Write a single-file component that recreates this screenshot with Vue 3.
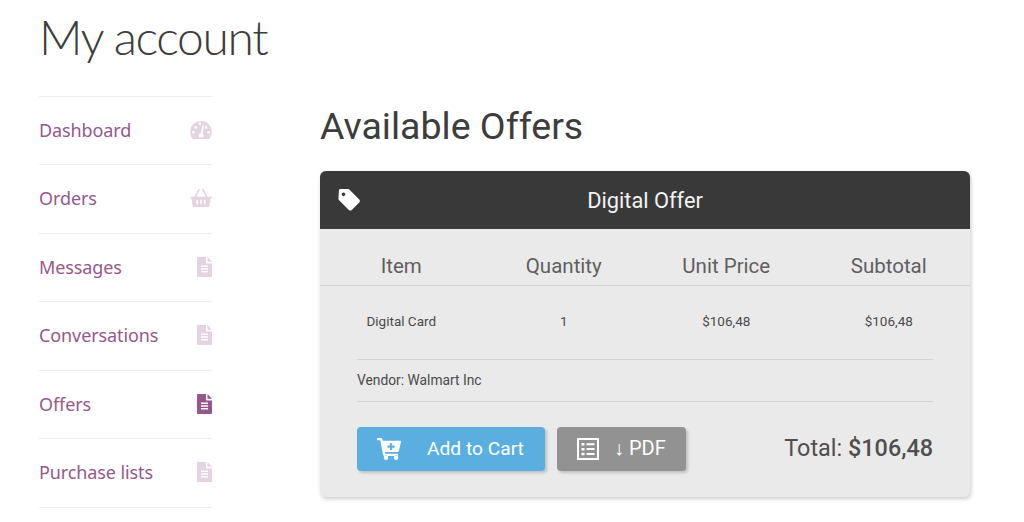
<template>
  <div class="page">
    <h1 class="title">My account</h1>
    <div class="columns">
      <nav class="side-nav">
        <a v-for="link in links" :key="link.label" class="nav-link" :class="{ active: link.active }">
          <span>{{ link.label }}</span>
          <svg v-if="link.icon === 'gauge'" class="nav-icon gauge" viewBox="0 0 24 20">
            <path fill-rule="evenodd" d="M12 0C5.400 0 0 5.400 0 12c0 2.700.8 5.200 2.200 7.200.3.500.8.800 1.400.800h16.800c.6 0 1.100-.3 1.400-.8C23.200 17.200 24 14.700 24 12 24 5.400 18.600 0 12 0zM3.600 14.200a1.600 1.600 0 1 1 0-3.200 1.600 1.600 0 0 1 0 3.200zm2.600-5.500a1.600 1.600 0 1 1 0-3.200 1.600 1.600 0 0 1 0 3.200zM10.800 4.500a1.500 1.500 0 1 1 0-3 1.500 1.500 0 0 1 0 3zm4.400.9-1.200 9a2.500 2.500 0 0 1 .6 3.600H9.800a2.500 2.500 0 0 1 1.800-4l2-8.800a.8.800 0 0 1 1.600.2zM20.400 14.200a1.600 1.600 0 1 1 0-3.200 1.600 1.600 0 0 1 0 3.200zm-2.600-5.500a1.600 1.600 0 1 1 0-3.200 1.600 1.600 0 0 1 0 3.200z" />
          </svg>
          <svg v-else-if="link.icon === 'basket'" class="nav-icon basket" viewBox="0 0 24 20">
            <path fill-rule="evenodd" d="M0 8.500h4.600L9 .5c.3-.5.900-.6 1.300-.3.400.2.500.7.300 1.100L6.800 8.500h10.400L13.400 1.300c-.2-.4-.1-.9.300-1.100.4-.3 1-.2 1.300.3l4.400 8H24v1.800h-1.300L21.300 19c-.1.600-.6 1-1.200 1H3.900c-.6 0-1.100-.4-1.200-1L1.300 10.300H0zM7 12v5h1.800v-5zm4.100 0v5h1.800v-5zm4.100 0v5H17v-5z" />
          </svg>
          <svg v-else class="nav-icon doc" viewBox="0 0 15 20">
            <path fill-rule="evenodd" d="M1 0h8v5.500c0 .6.400 1 1 1h5V19c0 .6-.4 1-1 1H1c-.6 0-1-.4-1-1V1c0-.6.400-1 1-1zM4 8.500V10h7V8.500zm0 2.800v1.500h7v-1.500zm0 2.800v1.500h7v-1.500zM10.500 0 15 4.800h-4.500z" />
          </svg>
        </a>
      </nav>
      <main class="content">
        <h2 class="heading">Available Offers</h2>
        <section class="card">
          <header class="card-head">
            <svg class="tag" viewBox="0 0 24 24">
              <path fill-rule="evenodd" d="M1 1.500C1 .7 1.700 0 2.500 0h8.300c.7 0 1.300.3 1.800.8l10.600 10.600c.9.900.9 2.300 0 3.200l-8.200 8.200c-.9.900-2.300.9-3.200 0L1.200 12.200c-.5-.5-.7-1.100-.7-1.800zM6 7.800a2 2 0 1 0 0-4 2 2 0 0 0 0 4z" />
            </svg>
            <span>Digital Offer</span>
          </header>
          <div class="grid-row grid-head">
            <div v-for="col in columns" :key="col">{{ col }}</div>
          </div>
          <div class="grid-row grid-body">
            <div>Digital Card</div>
            <div>1</div>
            <div>$106,48</div>
            <div>$106,48</div>
          </div>
          <div class="card-inner">
            <div class="vendor">Vendor: Walmart Inc</div>
            <div class="actions">
              <button class="btn btn-cart">
                <svg class="cart" viewBox="0 0 26 24">
                  <path fill-rule="evenodd" d="M0 0h4.600c.6 0 1 .3 1.100.9L6.100 3H25c.7 0 1.100.6 1 1.300l-2.200 10c-.1.500-.6.900-1.100.9H8.700l.4 1.900h13.600v2.400H7.600c-.5 0-1-.4-1.100-.9L3.500 2.400H0zM14 5.800v2.500h-2.600v2.400H14v2.500h2.400v-2.500H19V8.300h-2.600V5.800zM9.700 19a2.500 2.500 0 1 1 0 5 2.500 2.500 0 0 1 0-5zm11 0a2.500 2.500 0 1 1 0 5 2.500 2.500 0 0 1 0-5z" />
                </svg>
                <span>Add to Cart</span>
              </button>
              <button class="btn btn-pdf">
                <svg class="list" viewBox="0 0 22 22">
                  <path fill-rule="evenodd" d="M0 0h22v22H0zM2 2v18h18V2zM4.500 5h3v2.500h-3zm5 .2h8v2h-8zm-5 4.700h3v2.500h-3zm5 .2h8v2h-8zm-5 4.700h3v2.500h-3zm5 .2h8v2h-8z" />
                </svg>
                <span>↓ PDF</span>
              </button>
              <div class="total">Total: <b>$106,48</b></div>
            </div>
          </div>
        </section>
      </main>
    </div>
  </div>
</template>

<script setup>
const links = [
  { label: 'Dashboard', icon: 'gauge' },
  { label: 'Orders', icon: 'basket' },
  { label: 'Messages', icon: 'doc' },
  { label: 'Conversations', icon: 'doc' },
  { label: 'Offers', icon: 'doc', active: true },
  { label: 'Purchase lists', icon: 'doc' }
]
const columns = ['Item', 'Quantity', 'Unit Price', 'Subtotal']
</script>

<style>
html, body { background: #fff; overflow: hidden; }
</style>

<style scoped>
.page { width: 1024px; height: 522px; overflow: hidden; padding-left: 39px; box-sizing: border-box; font-family: Roboto, sans-serif; }
.title { margin: 0; height: 96px; padding-top: 8px; box-sizing: border-box; font: 300 48px/58px Lato, sans-serif; letter-spacing: -1.4px; color: #3d3d3d; }
.columns { display: flex; }
.side-nav { width: 173px; border-top: 1px solid #eee; flex-shrink: 0; }
.nav-link { height: 68.5px; padding-bottom: 1px; box-sizing: border-box; border-bottom: 1px solid #eee; display: flex; align-items: center; justify-content: space-between; font: 400 18px "Noto Sans", sans-serif; letter-spacing: -0.1px; color: #96588a; }
.nav-link:first-child { height: 68px; }
.nav-icon { fill: #96588a; opacity: 0.25; display: block; }
.nav-link.active .nav-icon { opacity: 1; }
.gauge, .basket { width: 22px; height: 18px; }
.doc { width: 15px; height: 20px; }
.content { margin-left: 108px; width: 650px; }
.heading { margin: 0; height: 75px; padding-top: 5px; box-sizing: border-box; font: 400 37.500px/50px Roboto, sans-serif; color: #3d3d3d; }
.card { height: 326px; background: #eaeaea; border-radius: 6px; box-shadow: 1px 2px 4px rgba(0, 0, 0, 0.2); }
.card-head { position: relative; height: 58px; background: #393939; border-radius: 6px 6px 0 0; display: flex; align-items: center; justify-content: center; color: #f2f2f2; font-size: 21.800px; }
.tag { position: absolute; left: 18px; top: 18px; width: 22px; height: 22px; fill: #fff; }
.grid-row { display: grid; grid-template-columns: repeat(4, 1fr); text-align: center; color: #4a4a4a; }
.grid-head { height: 57px; align-items: end; padding-bottom: 7px; box-sizing: border-box; border-bottom: 1px solid #d4d4d4; font-size: 20.500px; color: #5f5f5f; }
.grid-body { height: 73px; align-items: center; padding-bottom: 4px; box-sizing: border-box; font-size: 13.500px; }
.card-inner { margin: 0 37px; border-top: 1px solid #d4d4d4; }
.vendor { height: 42px; line-height: 41px; box-sizing: border-box; border-bottom: 1px solid #d4d4d4; font-size: 13.800px; color: #4a4a4a; }
.actions { display: flex; align-items: center; padding-top: 25px; }
.btn { height: 44px; border: 0; border-radius: 4px; color: #fff; font: 400 19.200px Roboto, sans-serif; display: flex; align-items: center; box-shadow: 2px 2px 3px rgba(0, 0, 0, 0.18); padding: 0; }
.btn span { position: relative; top: -1px; }
.btn-cart { width: 188px; background: #5aafe0; padding-left: 20px; gap: 26px; }
.btn-pdf { width: 129px; margin-left: 12px; background: #929292; padding-left: 20px; gap: 15px; font-size: 20px; }
.cart { width: 24px; height: 22px; fill: #fff; }
.list { width: 22px; height: 22px; fill: #fff; }
.total { margin-left: auto; font-size: 23.400px; color: #4f4f4f; position: relative; top: -1px; }
.total b { font-weight: 500; }
</style>
